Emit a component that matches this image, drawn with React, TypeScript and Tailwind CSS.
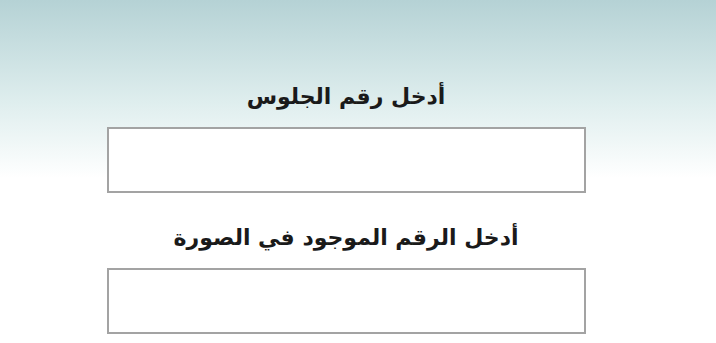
export default function App() {
  return (
    <div
      dir="rtl"
      className="w-[716px] h-[343px] overflow-hidden bg-linear-to-b from-[#b5d2d5] via-[#dfeeee] via-30% to-white to-52% flex flex-col items-center pt-[81px] pr-[24px]"
      style={{ fontFamily: '"DejaVu Sans", "Noto Sans", sans-serif' }}
    >
      <label className="h-[31px] leading-[31px] text-[22px] font-bold text-[#1a1a1a]">
        أدخل رقم الجلوس
      </label>
      <input
        type="text"
        className="mt-[15px] w-[479px] h-[66px] bg-white border-2 border-[#a3a3a3] outline-none"
      />
      <label className="mt-[29px] h-[31px] leading-[31px] text-[22px] font-bold text-[#1a1a1a]">
        أدخل الرقم الموجود في الصورة
      </label>
      <input
        type="text"
        className="mt-[15px] w-[479px] h-[66px] bg-white border-2 border-[#a3a3a3] outline-none"
      />
    </div>
  );
}
